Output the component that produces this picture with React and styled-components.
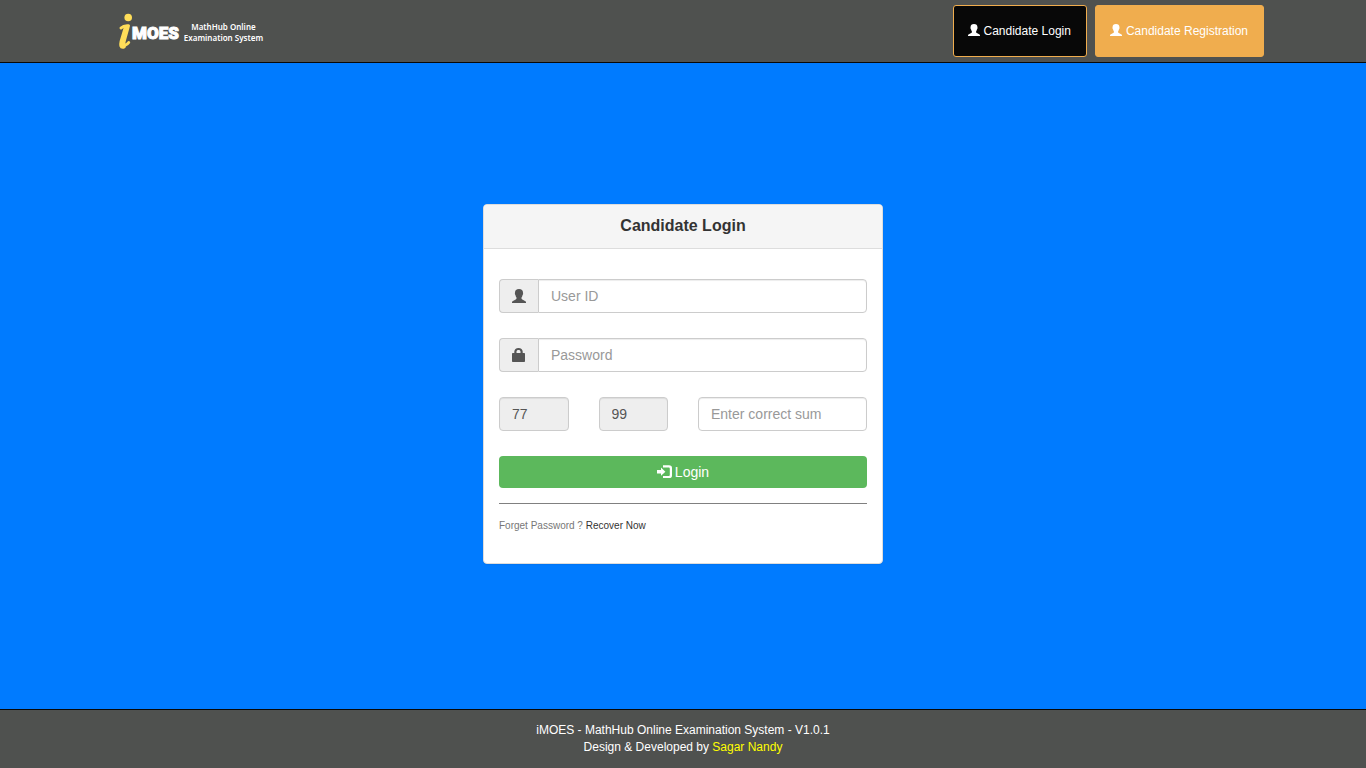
import React from "react";
import styled, { createGlobalStyle } from "styled-components";

const GlobalStyle = createGlobalStyle`
  *, *::before, *::after { box-sizing: border-box; }
  body {
    margin: 0;
    background: #007bff;
    color: #333;
    font-family: "Liberation Sans", Arial, sans-serif;
    font-size: 14px;
    line-height: 20px;
  }
`;

const Page = styled.div`
  min-height: 100vh;
  display: flex;
  flex-direction: column;
`;

const Header = styled.header`
  background: #4f514f;
  border-bottom: 1px solid #080808;
  padding: 5px 16px;
`;

const HeaderInner = styled.div`
  max-width: 1162px;
  margin: 0 auto;
  padding-left: 16px;
  display: flex;
  align-items: center;
  justify-content: space-between;
`;

const Brand = styled.a`
  display: flex;
  align-items: center;
  color: #fff;
  text-decoration: none;
`;

const BrandName = styled.span`
  padding-top: 4px;
  font-family: Roboto, "Liberation Sans", sans-serif;
  font-weight: 900;
  font-size: 17px;
  line-height: 24px;
  -webkit-text-stroke: 1px #fff;
`;

const BrandTag = styled.span`
  margin-left: 5px;
  padding-top: 2px;
  font-family: "Noto Sans", sans-serif;
  font-weight: 600;
  font-size: 8px;
  line-height: 11px;
  text-align: center;
`;

const Nav = styled.nav`
  display: flex;
  gap: 8px;
`;

const NavLink = styled.a`
  display: flex;
  align-items: center;
  gap: 4px;
  height: 52px;
  padding: 0 15px 0 14px;
  border: 1px solid #f0ad4e;
  border-radius: 3px;
  background: ${(p) => (p.$active ? "#080808" : "#f0ad4e")};
  color: #fff;
  font-size: 12px;
  line-height: 18px;
  text-decoration: none;
  svg { margin-bottom: 2px; }
`;

const Main = styled.main`
  flex: 1;
  display: flex;
  align-items: center;
  justify-content: center;
  padding: 16px 16px 20px;
`;

const Card = styled.section`
  width: 100%;
  max-width: 400px;
  background: #fff;
  border: 1px solid #ddd;
  border-radius: 4px;
  box-shadow: 0 1px 1px rgba(0, 0, 0, 0.05);
`;

const CardTitle = styled.h1`
  margin: 0;
  padding: 11px 15px 12px;
  background: #f5f5f5;
  border-bottom: 1px solid #ddd;
  border-radius: 3px 3px 0 0;
  font-size: 16px;
  line-height: 20px;
  text-align: center;
`;

const Form = styled.form`
  padding: 30px 15px;
`;

const Group = styled.div`
  display: flex;
  margin-bottom: 25px;
`;

const Addon = styled.label`
  display: flex;
  flex: none;
  align-items: center;
  justify-content: center;
  width: 39px;
  background: #eee;
  color: #555;
  border: 1px solid #ccc;
  border-right: 0;
  border-radius: 4px 0 0 4px;
`;

const Input = styled.input`
  width: 100%;
  min-width: 0;
  height: 34px;
  padding: 6px 12px;
  border: 1px solid #ccc;
  border-radius: ${(p) => (p.$joined ? "0 4px 4px 0" : "4px")};
  box-shadow: inset 0 1px 1px rgba(0, 0, 0, 0.075);
  background: ${(p) => (p.readOnly ? "#eee" : "#fff")};
  color: #555;
  font: inherit;
  &::placeholder { color: #999; opacity: 1; }
`;

const SumRow = styled.div`
  display: grid;
  grid-template-columns: 1fr 1fr 2fr;
  margin: 0 -15px 25px;
`;

const SumCell = styled.div`
  padding: 0 15px;
`;

const Submit = styled.button`
  display: flex;
  align-items: center;
  justify-content: center;
  gap: 3px;
  width: 100%;
  height: 32px;
  border: 0;
  border-radius: 4px;
  background: #5cb85c;
  color: #fff;
  font: inherit;
  cursor: pointer;
`;

const Divider = styled.hr`
  margin: 15px 0 14px;
  border: 0;
  border-top: 1px solid #808080;
`;

const Help = styled.p`
  margin: 0;
  color: #777;
  font-size: 10px;
  line-height: 15px;
  a { color: #333; text-decoration: none; }
`;

const Footer = styled.footer`
  background: #4f514f;
  border-top: 1px solid #080808;
  padding: 12px 16px;
  color: #fff;
  text-align: center;
  font-size: 12px;
  line-height: 17px;
  a { color: #ff0; text-decoration: none; }
`;

const UserIcon = ({ size }) => (
  <svg width={size} height={size} viewBox="0 0 14 14" fill="currentColor" aria-hidden="true">
    <path d="M7 0C4.400 0 3 1.400 3 3.600c0 .5-.2.8-.1 1.400.1.700.5.900.7 1.500.2.900.4 1.500.9 2v1.100c0 .5-.3.8-.8 1L1 11.900c-.7.300-1 .7-1 1.300v.8h14v-.8c0-.6-.3-1-1-1.300l-2.700-1.300c-.5-.2-.8-.5-.8-1V8.500c.5-.5.7-1.100.9-2 .2-.6.6-.8.7-1.500.1-.6-.1-.9-.1-1.400C11 1.400 9.600 0 7 0z" />
  </svg>
);

const LockIcon = () => (
  <svg width="14" height="14" viewBox="0 0 14 14" fill="currentColor" aria-hidden="true">
    <path
      fillRule="evenodd"
      d="M2.300 5V3.600C2.300 1.500 4 0 6.500 0s4.200 1.500 4.200 3.600V5H12c.6 0 1 .4 1 1v7c0 .6-.4 1-1 1H1c-.6 0-1-.4-1-1V6c0-.6.4-1 1-1zM4.500 5h4V3.600C8.500 2.600 7.700 2 6.500 2s-2 .6-2 1.600z"
    />
  </svg>
);

const LoginIcon = () => (
  <svg width="15" height="14" viewBox="0 0 15 14" fill="currentColor" aria-hidden="true">
    <path d="M0 5h4V2.600L8.400 6.700 4 10.800V8.400H0z" />
    <path d="M6 .3h6C14 .3 15 1.300 15 3v7.400c0 1.700-1 2.700-3 2.700H6V11h5.500c.9 0 1.300-.4 1.300-1.300v-6c0-.9-.4-1.300-1.300-1.300H6z" />
  </svg>
);

const BrandMark = () => (
  <svg width="14" height="38" viewBox="0 0 14 38" aria-hidden="true">
    <circle cx="10.200" cy="5.500" r="3.800" fill="#ffde59" />
    <path
      d="M3 16c2-2 4.500-2.600 7.500-2.300C9 20 5.900 29 5.700 32c-.1 2.200 3 1.400 5-1.500"
      fill="none"
      stroke="#ffde59"
      strokeWidth="3"
      strokeLinecap="round"
      strokeLinejoin="round"
    />
    <path
      d="M8.300 15.500 4 30c-.8 3.500-.3 4.600 1.300 4.300"
      fill="none"
      stroke="#ffde59"
      strokeWidth="5"
      strokeLinecap="round"
    />
  </svg>
);

export default function App() {
  return (
    <Page>
      <GlobalStyle />
      <Header>
        <HeaderInner>
          <Brand href="#">
            <BrandMark />
            <BrandName>MOES</BrandName>
            <BrandTag>
              MathHub Online
              <br />
              Examination System
            </BrandTag>
          </Brand>
          <Nav>
            <NavLink href="#" $active>
              <UserIcon size={12} />
              Candidate Login
            </NavLink>
            <NavLink href="#">
              <UserIcon size={12} />
              Candidate Registration
            </NavLink>
          </Nav>
        </HeaderInner>
      </Header>
      <Main>
        <Card>
          <CardTitle>Candidate Login</CardTitle>
          <Form onSubmit={(e) => e.preventDefault()}>
            <Group>
              <Addon htmlFor="user-id" aria-label="User ID">
                <UserIcon size={14} />
              </Addon>
              <Input id="user-id" type="text" placeholder="User ID" $joined />
            </Group>
            <Group>
              <Addon htmlFor="password" aria-label="Password">
                <LockIcon />
              </Addon>
              <Input id="password" type="password" placeholder="Password" $joined />
            </Group>
            <SumRow>
              <SumCell>
                <Input type="text" aria-label="First number" value="77" readOnly />
              </SumCell>
              <SumCell>
                <Input type="text" aria-label="Second number" value="99" readOnly />
              </SumCell>
              <SumCell>
                <Input type="text" aria-label="Sum" placeholder="Enter correct sum" />
              </SumCell>
            </SumRow>
            <Submit type="submit">
              <LoginIcon />
              Login
            </Submit>
            <Divider />
            <Help>
              Forget Password ? <a href="#">Recover Now</a>
            </Help>
          </Form>
        </Card>
      </Main>
      <Footer>
        iMOES - MathHub Online Examination System - V1.0.1
        <br />
        Design &amp; Developed by <a href="#">Sagar Nandy</a>
      </Footer>
    </Page>
  );
}
